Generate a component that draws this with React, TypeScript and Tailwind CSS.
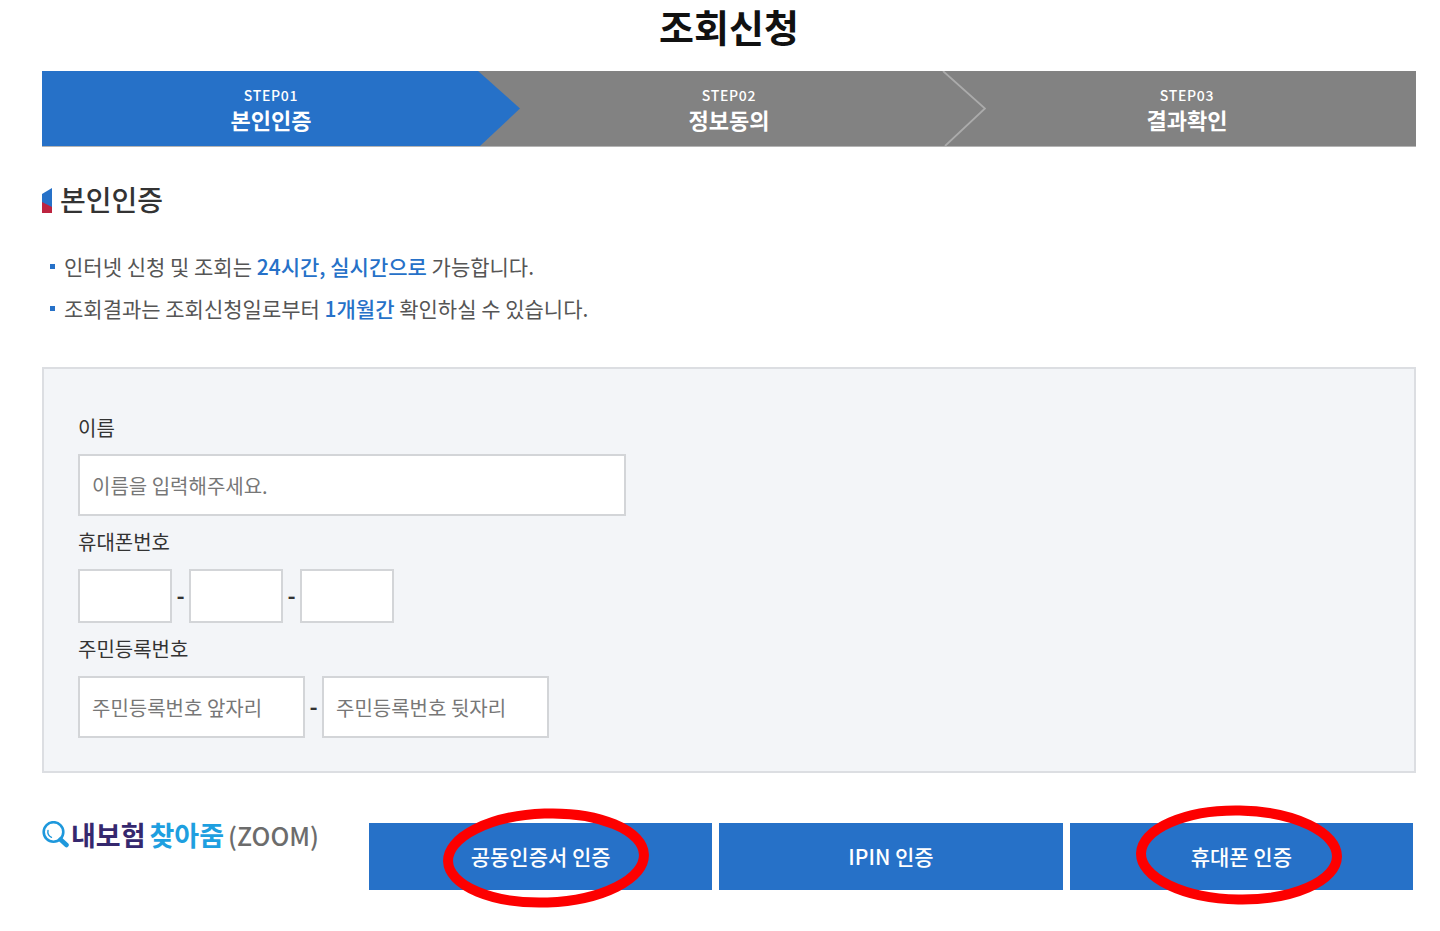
import type { ReactNode } from "react";

const steps = [
  { code: "STEP01", name: "본인인증" },
  { code: "STEP02", name: "정보동의" },
  { code: "STEP03", name: "결과확인" },
];

function Stepper() {
  return (
    <ol className="mt-5 grid h-19 grid-cols-3 border-b border-[#b4b4b4] bg-[#828282] text-center text-white">
      {steps.map((step, i) => (
        <li
          key={step.code}
          aria-current={i === 0 ? "step" : undefined}
          className="relative flex flex-col items-center justify-center"
        >
          {i === 0 && (
            <span className="absolute inset-y-0 -right-5 left-0 bg-[#2671c8] [clip-path:polygon(0_0,calc(100%_-_42px)_0,100%_50%,calc(100%_-_40px)_100%,0_100%)]" />
          )}
          {i === 1 && (
            <svg
              className="absolute inset-y-0 -right-7 h-full w-11"
              viewBox="0 0 44 75"
              fill="none"
              stroke="#ababab"
              strokeWidth="1.8"
              aria-hidden="true"
            >
              <path d="M1 0 43 37.500 3 75" />
            </svg>
          )}
          <span className="relative text-sm leading-5 font-medium tracking-wider">{step.code}</span>
          <strong className="relative text-[22px] leading-7 font-bold">{step.name}</strong>
        </li>
      ))}
    </ol>
  );
}

function Bullet({ children }: { children: ReactNode }) {
  return (
    <li className="flex items-center gap-[9px]">
      <span className="ml-2 size-[5px] shrink-0 bg-[#2671c8]" />
      <p>{children}</p>
    </li>
  );
}

const fieldClass =
  "rounded-none border-2 border-[#d3d5d8] bg-white px-3 text-[20px] text-[#333] outline-none placeholder:text-[#777]";

function Dash() {
  return <span className="w-[17px] pb-1 text-center text-[22px] leading-8 font-bold">-</span>;
}

function Ring({ tilt }: { tilt: "left" | "right" }) {
  return (
    <svg
      className={
        tilt === "left"
          ? "pointer-events-none absolute top-1/2 left-1/2 h-[102px] w-[210px] -translate-x-[100px] -translate-y-[50px]"
          : "pointer-events-none absolute top-1/2 left-1/2 h-[102px] w-[210px] -translate-x-[107px] -translate-y-[53px]"
      }
      viewBox="0 0 210 102"
      fill="none"
      aria-hidden="true"
    >
      <ellipse
        cx="105"
        cy="51"
        rx="98"
        ry="44.500"
        stroke="#fd0000"
        strokeWidth="10"
        transform={tilt === "left" ? "rotate(-2 105 51)" : "rotate(1 105 51)"}
      />
    </svg>
  );
}

function AuthButton({ children, ring }: { children: ReactNode; ring?: "left" | "right" }) {
  return (
    <button type="button" className="relative h-[67px] flex-1 bg-[#2671c8] text-[21px] font-medium text-white">
      {children}
      {ring && <Ring tilt={ring} />}
    </button>
  );
}

function Logo() {
  return (
    <a href="#home" className="flex h-7 shrink-0 items-center text-[27px] leading-7 font-bold whitespace-nowrap">
      <svg className="mr-0.5 h-7 w-[27px]" viewBox="0 0 27 28" fill="none" stroke="#1e98dc" aria-hidden="true">
        <circle cx="11.500" cy="11" r="9.800" strokeWidth="2.600" />
        <path d="M18.500 18.500 24.500 24" strokeWidth="4.500" strokeLinecap="round" />
        <path d="M6 9.500c-.6 3 .8 5.500 3.500 6.800" strokeWidth="1.400" strokeLinecap="round" />
      </svg>
      <span className="text-[#35286e]">내보험</span>
      <span className="ml-1 text-[#1e9fe0]">찾아줌</span>
      <span className="ml-1 text-[25px] leading-6 font-medium text-[#6c6c6c]">(ZOOM)</span>
    </a>
  );
}

export default function App() {
  return (
    <main className="min-h-screen bg-white pr-6 pl-[42px] font-['Noto_Sans_CJK_KR','Noto_Sans',sans-serif] text-[#333]">
      <h1 className="pt-px text-center text-[38px] leading-[50px] font-bold text-[#111]">조회신청</h1>
      <Stepper />

      <h2 className="mt-[31px] flex items-center gap-[8px] text-[28px] leading-[42px] font-medium">
        <svg className="mt-0.5 h-[25px] w-[10px]" viewBox="0 0 10 25" aria-hidden="true">
          <path d="M0 6 10 0v20L0 15z" fill="#2671c8" />
          <path d="M0 14 10 19v6H0z" fill="#bd2440" />
        </svg>
        본인인증
      </h2>

      <ul className="mt-[25px] text-[21px] leading-[42px] text-[#555]">
        <Bullet>
          인터넷 신청 및 조회는 <em className="font-medium text-[#2671c8] not-italic">24시간, 실시간으로</em> 가능합니다.
        </Bullet>
        <Bullet>
          조회결과는 조회신청일로부터 <em className="font-medium text-[#2671c8] not-italic">1개월간</em> 확인하실 수
          있습니다.
        </Bullet>
      </ul>

      <form>
        <div className="mt-[38px] border-2 border-[#dcdee2] bg-[#f3f5f8] px-[34px] pt-11 pb-[33px] text-[20px] leading-[30px]">
          <label htmlFor="name" className="block">
            이름
          </label>
          <input
            id="name"
            type="text"
            placeholder="이름을 입력해주세요."
            className={`${fieldClass} mt-[11px] block h-[62px] w-full max-w-[548px]`}
          />

          <label htmlFor="phone1" className="mt-[11px] block">
            휴대폰번호
          </label>
          <div className="mt-3 flex items-center">
            <input id="phone1" type="tel" className={`${fieldClass} h-[54px] w-[94px]`} />
            <Dash />
            <input aria-label="휴대폰번호 가운데자리" type="tel" className={`${fieldClass} h-[54px] w-[94px]`} />
            <Dash />
            <input aria-label="휴대폰번호 뒷자리" type="tel" className={`${fieldClass} h-[54px] w-[94px]`} />
          </div>

          <label htmlFor="rrn1" className="mt-[11px] block">
            주민등록번호
          </label>
          <div className="mt-3 flex items-center">
            <input
              id="rrn1"
              type="text"
              placeholder="주민등록번호 앞자리"
              className={`${fieldClass} h-[62px] w-[227px]`}
            />
            <Dash />
            <input
              aria-label="주민등록번호 뒷자리"
              type="text"
              placeholder="주민등록번호 뒷자리"
              className={`${fieldClass} h-[62px] w-[227px]`}
            />
          </div>
        </div>

        <div className="mt-[50px] flex items-start pr-[3px]">
          <div className="-mt-0.5 w-[327px] shrink-0">
            <Logo />
          </div>
          <div className="flex flex-1 gap-[7px]">
            <AuthButton ring="left">공동인증서 인증</AuthButton>
            <AuthButton>IPIN 인증</AuthButton>
            <AuthButton ring="right">휴대폰 인증</AuthButton>
          </div>
        </div>
      </form>
    </main>
  );
}
